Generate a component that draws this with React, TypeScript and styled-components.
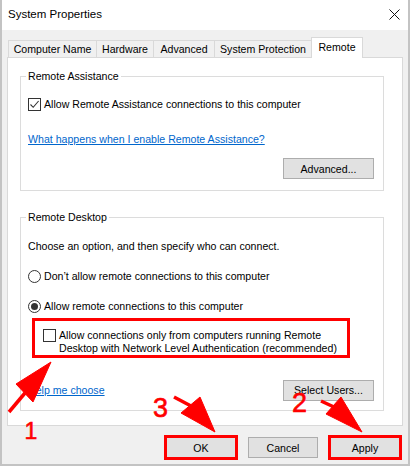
import React from 'react';
import styled, { createGlobalStyle } from 'styled-components';

const GlobalStyle = createGlobalStyle`
  html, body { margin: 0; padding: 0; background: #ffffff; }
  body { font-family: "Liberation Sans", Arial, sans-serif; font-size: 10.6px; color: #000; }
`;

//--------------- STYLES
const Window = styled.div`
  position: relative;
  width: 410px;
  height: 466px;
  box-sizing: border-box;
  border: 2px solid #c3c3c3;
  border-top: none;
  background: #f0f0f0;
  display: flex;
  flex-direction: column;
  overflow: hidden;
`;

const TitleBar = styled.div`
  height: 30px;
  flex: none;
  background: #ffffff;
  display: flex;
  align-items: center;
  justify-content: space-between;
  padding: 0 8px 2px 6px;
  box-sizing: border-box;
  font-size: 11.5px;
`;

const CloseIcon = styled.svg`
  width: 11px;
  height: 11px;
`;

const TabStrip = styled.div`
  display: flex;
  align-items: flex-end;
  padding: 7px 0 0 6px;
  margin-bottom: -1px;
`;

const Tab = styled.div<{ $w: number; $active?: boolean }>`
  position: relative;
  z-index: ${(p) => (p.$active ? 1 : 0)};
  width: ${(p) => p.$w}px;
  height: ${(p) => (p.$active ? 21 : 17)}px;
  margin-bottom: ${(p) => (p.$active ? 0 : 1)}px;
  box-sizing: border-box;
  border: 1px solid #d9d9d9;
  border-bottom: none;
  border-right: ${(p) => (p.$active ? '1px solid #d9d9d9' : 'none')};
  background: ${(p) => (p.$active ? '#ffffff' : '#f0f0f0')};
  display: flex;
  align-items: center;
  justify-content: center;
  padding-bottom: ${(p) => (p.$active ? 3 : 0)}px;
  white-space: nowrap;
`;

const Panel = styled.div`
  height: 369px;
  margin: 0 5px;
  box-sizing: border-box;
  border: 1px solid #d9d9d9;
  background: #ffffff;
  padding: 11.5px 18px 0 12px;
  display: flex;
  flex-direction: column;
  gap: 19.5px;
`;

const Group = styled.fieldset<{ $pb: number }>`
  margin: 0;
  min-width: 0;
  border: 1px solid #dcdcdc;
  padding: 0 9px ${(p) => p.$pb}px 7px;
  display: flex;
  flex-direction: column;
`;

const GroupTitle = styled.legend`
  padding: 0 2px;
  margin-left: -2px;
  line-height: 13px;
`;

const Row = styled.div<{ $mt: number; $indent?: number }>`
  display: flex;
  align-items: center;
  gap: 3px;
  margin-top: ${(p) => p.$mt}px;
  margin-left: ${(p) => p.$indent || 0}px;
  line-height: 13px;
  white-space: nowrap;
`;

const Label = styled.span`
  line-height: 13px;
`;

const Box = styled.span`
  flex: none;
  width: 13px;
  height: 13px;
  box-sizing: border-box;
  border: 1px solid #333333;
  background: #ffffff;
  display: flex;
  align-items: center;
  justify-content: center;
`;

const Radio = styled.span<{ $on?: boolean }>`
  flex: none;
  width: 13px;
  height: 13px;
  box-sizing: border-box;
  border: 1px solid #333333;
  border-radius: 50%;
  background: #ffffff;
  display: flex;
  align-items: center;
  justify-content: center;
  &::after {
    content: '';
    display: ${(p) => (p.$on ? 'block' : 'none')};
    width: 7px;
    height: 7px;
    border-radius: 50%;
    background: #333333;
  }
`;

const Link = styled.a`
  color: #0066cc;
  text-decoration: underline;
  line-height: 13px;
  cursor: pointer;
`;

const Button = styled.div<{ $w: number; $default?: boolean; $marked?: boolean }>`
  width: ${(p) => p.$w}px;
  height: 21px;
  box-sizing: border-box;
  background: #e1e1e1;
  border: 1px solid ${(p) => (p.$default ? '#0078d7' : '#adadad')};
  display: flex;
  align-items: center;
  justify-content: center;
  outline: ${(p) => (p.$marked ? '3px solid #ff0000' : 'none')};
  outline-offset: -1px;
`;

const ButtonRow = styled.div<{ $mt: number }>`
  display: flex;
  justify-content: flex-end;
  margin-top: ${(p) => p.$mt}px;
`;

const SplitRow = styled.div<{ $mt: number }>`
  display: flex;
  align-items: center;
  justify-content: space-between;
  margin-top: ${(p) => p.$mt}px;
`;

const RedBox = styled.div`
  width: 318px;
  height: 40px;
  box-sizing: border-box;
  margin: 4.8px 0 0 4px;
  border: 3px solid #ff0000;
  padding: 8px 8px 0 8px;
  display: flex;
  align-items: flex-start;
  gap: 3px;
`;

const Lines = styled.div`
  line-height: 13px;
`;

const Footer = styled.div`
  display: flex;
  justify-content: flex-end;
  gap: 12px;
  padding: 11px 8px 0 0;
`;

const Marks = styled.svg`
  position: absolute;
  left: -2px;
  top: 0;
  pointer-events: none;
`;

//--------------- COMPONENT
export default function App() {
  return (
    <>
      <GlobalStyle />
      <Window>
        <TitleBar>
          <span>System Properties</span>
          <CloseIcon viewBox="0 0 11 11">
            <path d="M0.5 0.5 L10.5 10.5 M10.5 0.5 L0.5 10.5" stroke="#111" strokeWidth="1" fill="none" />
          </CloseIcon>
        </TitleBar>

        <TabStrip>
          <Tab $w={88}>Computer Name</Tab>
          <Tab $w={57}>Hardware</Tab>
          <Tab $w={61}>Advanced</Tab>
          <Tab $w={97}>System Protection</Tab>
          <Tab $w={52} $active>Remote</Tab>
        </TabStrip>

        <Panel>
          <Group $pb={11}>
            <GroupTitle>Remote Assistance</GroupTitle>
            <Row $mt={15.5}>
              <Box>
                <svg width="11" height="11" viewBox="0 0 11 11">
                  <path d="M1.5 5.5 L4.2 8.3 L9.6 2" stroke="#333" strokeWidth="1.1" fill="none" />
                </svg>
              </Box>
              <Label>Allow Remote Assistance connections to this computer</Label>
            </Row>
            <Row $mt={21.5}>
              <Link>What happens when I enable Remote Assistance?</Link>
            </Row>
            <ButtonRow $mt={12.5}>
              <Button $w={91}>Advanced...</Button>
            </ButtonRow>
          </Group>

          <Group $pb={9}>
            <GroupTitle>Remote Desktop</GroupTitle>
            <Row $mt={16.7}>
              <Label>Choose an option, and then specify who can connect.</Label>
            </Row>
            <Row $mt={17}>
              <Radio />
              <Label>Don’t allow remote connections to this computer</Label>
            </Row>
            <Row $mt={17}>
              <Radio $on />
              <Label>Allow remote connections to this computer</Label>
            </Row>
            <RedBox>
              <Box />
              <Lines>
                Allow connections only from computers running Remote
                <br />
                Desktop with Network Level Authentication (recommended)
              </Lines>
            </RedBox>
            <SplitRow $mt={22}>
              <Link>Help me choose</Link>
              <Button $w={91}>Select Users...</Button>
            </SplitRow>
          </Group>
        </Panel>

        <Footer>
          <Button $w={70} $default $marked>OK</Button>
          <Button $w={70}>Cancel</Button>
          <Button $w={70} $marked>Apply</Button>
        </Footer>

        <Marks width="410" height="466" viewBox="0 0 410 466">
          <g fill="#ff0000" stroke="#ff0000" strokeLinejoin="round">
            <line x1="25" y1="393" x2="9" y2="412" strokeWidth="3.5" />
            <polygon points="51,362 16,384 33,402" strokeWidth="1" />
            <line x1="174" y1="397" x2="191" y2="406" strokeWidth="3.5" />
            <polygon points="215,432 181,413 200,397" strokeWidth="1" />
            <line x1="321" y1="401" x2="334" y2="407" strokeWidth="3.5" />
            <polygon points="362,432 326,414 341,397" strokeWidth="1" />
          </g>
          <g fill="#ff0000" stroke="#ff0000" strokeWidth="0.6" fontFamily="'Liberation Sans', Arial, sans-serif">
            <text x="24.5" y="439" fontSize="23">1</text>
            <text x="153" y="417" fontSize="27">3</text>
            <text x="292" y="412" fontSize="27">2</text>
          </g>
        </Marks>
      </Window>
    </>
  );
}
